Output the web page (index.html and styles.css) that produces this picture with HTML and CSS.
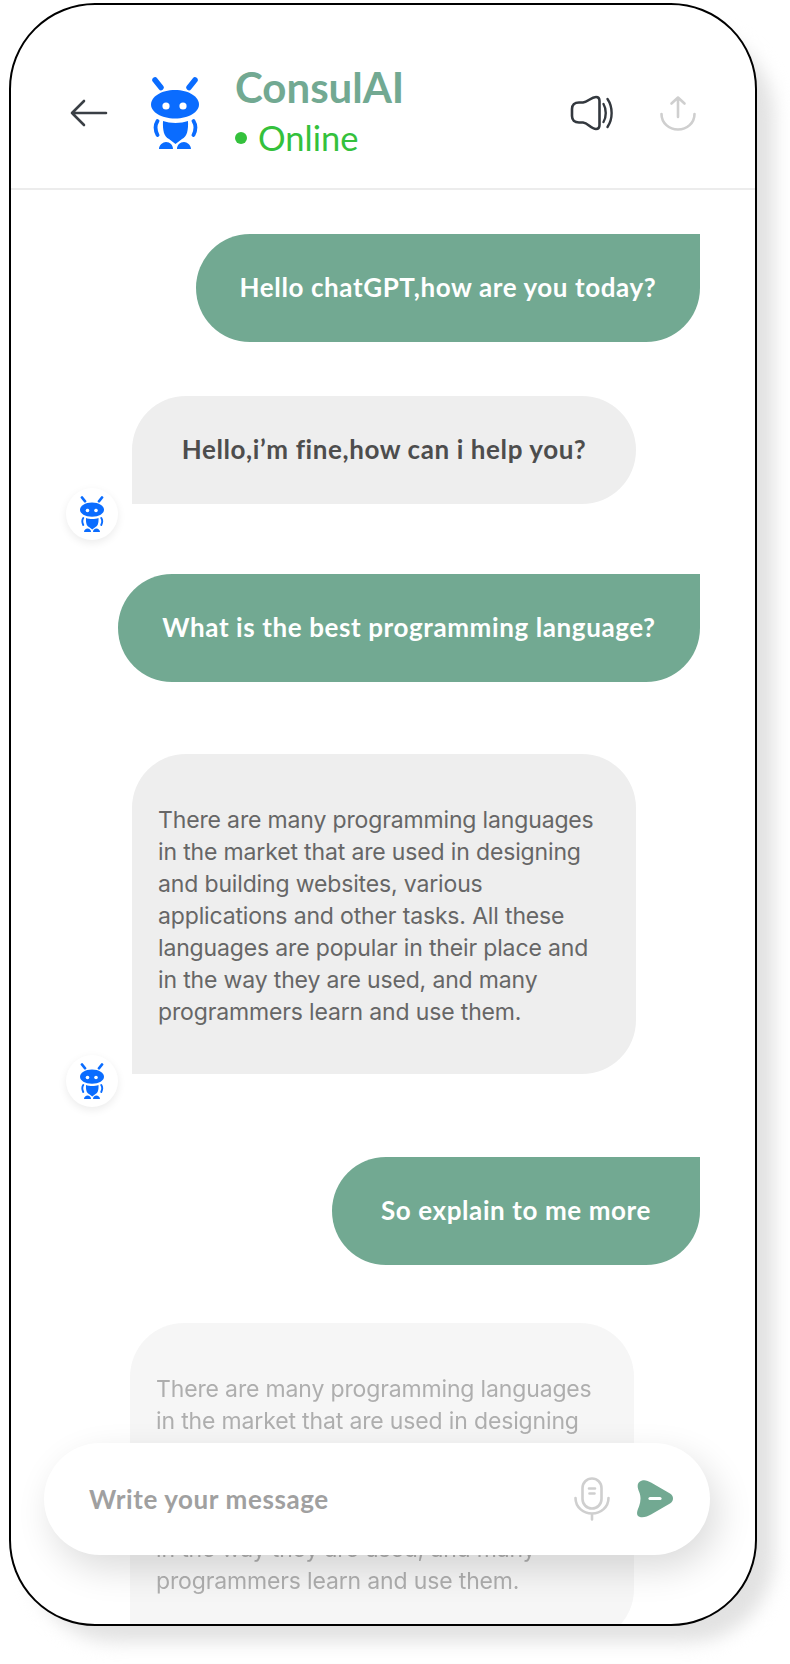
FILE: index.html
```html
<!DOCTYPE html>
<html>
<head>
    <meta charset="UTF-8">
    <meta name="viewport" content="width=device-width, initial-scale=1.0">
    <title>ConsulAI</title>
    <link rel="stylesheet" href="styles.css">
</head>
<body>
    <svg class="sprites" width="0" height="0">
        <symbol id="robot" viewBox="0 0 48 72">
            <path d="M4 3 10 10.500M44 3 38 10.500" stroke="#0a6cff" stroke-width="5.500" stroke-linecap="round" fill="none"/>
            <path d="M24 13C38 13 48 20 48 27.500 48 35 38 41.500 24 41.500 10 41.500 0 35 0 27.500 0 20 10 13 24 13Z" fill="#0a6cff"/>
            <circle cx="15" cy="29" r="3.600" fill="#fff"/>
            <circle cx="32" cy="29" r="3.600" fill="#fff"/>
            <path d="M12 44C19 46.500 30 46.500 37 44 37.500 53 36 60 31 62L24.500 67 18 62C13 60 11.500 53 12 44Z" fill="#0a6cff"/>
            <path d="M6.500 44C4 48 4 53 6.500 58M42.500 44C45 48 45 53 42.500 58" stroke="#0a6cff" stroke-width="3.800" stroke-linecap="round" fill="none"/>
            <path d="M8 72C8 68 12 65 15 65 19 65 22 68 22 72ZM26 72C26 68 29 65 33 65 36 65 40 68 40 72Z" fill="#0a6cff"/>
        </symbol>
    </svg>

    <div class="phone">
        <header class="top-bar">
            <svg class="back-icon" width="38" height="28" viewBox="0 0 38 28">
                <path d="M36 14H2M14 2 2 14 14 26" fill="none" stroke="#3a3f45" stroke-width="2.600" stroke-linecap="round" stroke-linejoin="round"/>
            </svg>
            <svg class="top-robot" width="48" height="72"><use href="#robot"/></svg>
            <div class="title-block">
                <h1>ConsulAI</h1>
                <p class="status"><span class="dot"></span>Online</p>
            </div>
            <svg class="sound-icon" width="44" height="36" viewBox="0 0 44 36">
                <path d="M9 7.500H13C18 7 21 2 26 2 28.500 2 29.500 4 29.500 6V30C29.500 32 28.500 34 26 34 21 34 18 28 13 27.500H9C4.500 27.500 2 25 2 21V14C2 10 4.500 7.500 9 7.500Z" fill="none" stroke="#33383e" stroke-width="2.600" stroke-linejoin="round"/>
                <path d="M33.500 9C36.500 14 36.500 22 33.500 27M37.500 4C43 12 43 24 37.500 32" fill="none" stroke="#33383e" stroke-width="2.400" stroke-linecap="round"/>
            </svg>
            <svg class="share-icon" width="36" height="36" viewBox="0 0 36 36">
                <path d="M18 22V2.500M11.500 8.500 18 2.500 24.500 8.500M1.500 19C1.500 28 9 34.500 18 34.500S34.500 28 34.500 19" fill="none" stroke="#cfcfcf" stroke-width="2.600" stroke-linecap="round" stroke-linejoin="round"/>
            </svg>
        </header>

        <main class="chat">
            <div class="bubble sent first">Hello chatGPT,how are you today?</div>

            <div class="bubble received short">
                Hello,i’m fine,how can i help you?
                <span class="avatar"><svg width="24" height="36"><use href="#robot"/></svg></span>
            </div>

            <div class="bubble sent wide">What is the best programming language?</div>

            <div class="bubble received long">
                There are many programming languages in the market that are used in designing and building websites, various applications and other tasks. All these languages are popular in their place and in the way they are used, and many programmers learn and use them.
                <span class="avatar"><svg width="24" height="36"><use href="#robot"/></svg></span>
            </div>

            <div class="bubble sent small">So explain to me more</div>

            <div class="bubble received long faded">
                There are many programming languages in the market that are used in designing and building websites, various applications and other tasks. All these languages are popular in their place and in the way they are used, and many programmers learn and use them.
            </div>
        </main>

        <div class="composer">
            <span class="placeholder">Write your message</span>
            <svg class="mic-icon" width="36" height="44" viewBox="0 0 36 44">
                <rect x="8.500" y="1.500" width="19" height="30" rx="9.500" fill="none" stroke="#cfcfcf" stroke-width="2.600"/>
                <path d="M15 11.500H21M15.500 16.500H20.500" stroke="#cfcfcf" stroke-width="2.600" stroke-linecap="round"/>
                <path d="M1.500 21C1.500 30 9 36.500 18 36.500S34.500 30 34.500 21M18 36.500V42.500" fill="none" stroke="#cfcfcf" stroke-width="2.600" stroke-linecap="round"/>
            </svg>
            <svg class="send-icon" width="38" height="38" viewBox="0 0 38 38">
                <path d="M6 .6C9 -.4 12 1 15 2.500L34 13.500C38 16 38 21 34 23.500L15 34.500C11 37 5 38.500 2 36 0 34 1.500 30 3 26.500 5 21.500 5 16 3 11.500 1.500 8 0 2.500 6 .6Z" fill="#72a992"/>
                <path d="M14 18.500H24" stroke="#fff" stroke-width="3.200" stroke-linecap="round"/>
            </svg>
        </div>
    </div>
</body>
</html>
```

FILE: styles.css
```css
* {
    margin: 0;
    padding: 0;
    box-sizing: border-box;
}

body {
    background-color: #fff;
    padding: 3px 0 0 9px;
    height: 1664px;
    overflow: hidden;
    font-family: 'Lato', sans-serif;
}

.sprites {
    position: absolute;
}

.phone {
    position: relative;
    width: 748px;
    height: 1623px;
    background-color: #fff;
    border: 2px solid #000;
    border-radius: 86px;
    overflow: hidden;
}

/* the shadow has to stay outside the clipped phone */
body::before {
    content: "";
    position: absolute;
    left: 30px;
    top: 30px;
    width: 744px;
    height: 1612px;
    border-radius: 86px;
    background-color: #e2e2e2;
    filter: blur(9px);
    z-index: -1;
}

.top-bar {
    display: flex;
    align-items: center;
    height: 185px;
    padding: 32px 0 0 59px;
    border-bottom: 2px solid #ececec;
}

.top-robot {
    margin-left: 43px;
}

.title-block {
    margin-left: 36px;
    width: 335px;
}

.title-block h1 {
    font-size: 42px;
    line-height: 50px;
    font-weight: 700;
    color: #72a992;
}

.status {
    display: flex;
    align-items: center;
    font-size: 34.5px;
    line-height: 52px;
    color: #34c13c;
}

.dot {
    width: 12px;
    height: 12px;
    margin-right: 11px;
    border-radius: 50%;
    background-color: #34c13c;
}

.share-icon {
    margin-left: 46px;
}

.chat {
    display: flex;
    flex-direction: column;
}

.bubble {
    position: relative;
    font-size: 26px;
    font-weight: 700;
    letter-spacing: 0.6px;
    border-radius: 54px;
    flex-shrink: 0;
}

.sent {
    align-self: flex-end;
    height: 108px;
    margin-right: 55px;
    line-height: 106px;
    text-align: center;
    color: #fff;
    background-color: #72a992;
    border-top-right-radius: 0;
}

.received {
    align-self: flex-start;
    width: 504px;
    margin-left: 121px;
    background-color: #eee;
    color: #4d4d4d;
    border-bottom-left-radius: 0;
}

.first {
    width: 504px;
    margin-top: 44px;
}

.short {
    height: 108px;
    margin-top: 54px;
    line-height: 106px;
    text-align: center;
}

.short .avatar {
    bottom: -36px;
}

.wide {
    width: 582px;
    margin-top: 70px;
}

.long {
    height: 320px;
    margin-top: 72px;
    padding: 50px 40px 0 26px;
    font-family: 'Inter', sans-serif;
    font-size: 23px;
    font-weight: 400;
    line-height: 32px;
    letter-spacing: -0.15px;
    color: #666;
}

.small {
    width: 368px;
    margin-top: 83px;
}

.faded {
    margin-top: 58px;
    margin-left: 119px;
    opacity: 0.52;
}

.avatar {
    position: absolute;
    left: -66px;
    bottom: -33px;
    display: flex;
    align-items: center;
    justify-content: center;
    width: 52px;
    height: 52px;
    border-radius: 50%;
    background-color: #fff;
    box-shadow: 0 3px 8px rgba(0, 0, 0, 0.08);
}

.composer {
    position: absolute;
    left: 33px;
    bottom: 69px;
    display: flex;
    align-items: center;
    width: 666px;
    height: 112px;
    padding: 0 36px 0 45px;
    border-radius: 56px;
    background-color: #fff;
    box-shadow: 8px 14px 36px rgba(0, 0, 0, 0.14);
}

.placeholder {
    flex: 1;
    font-size: 26px;
    font-weight: 700;
    letter-spacing: 0.6px;
    color: #a0a0a0;
}

.send-icon {
    margin-left: 26px;
}
```
